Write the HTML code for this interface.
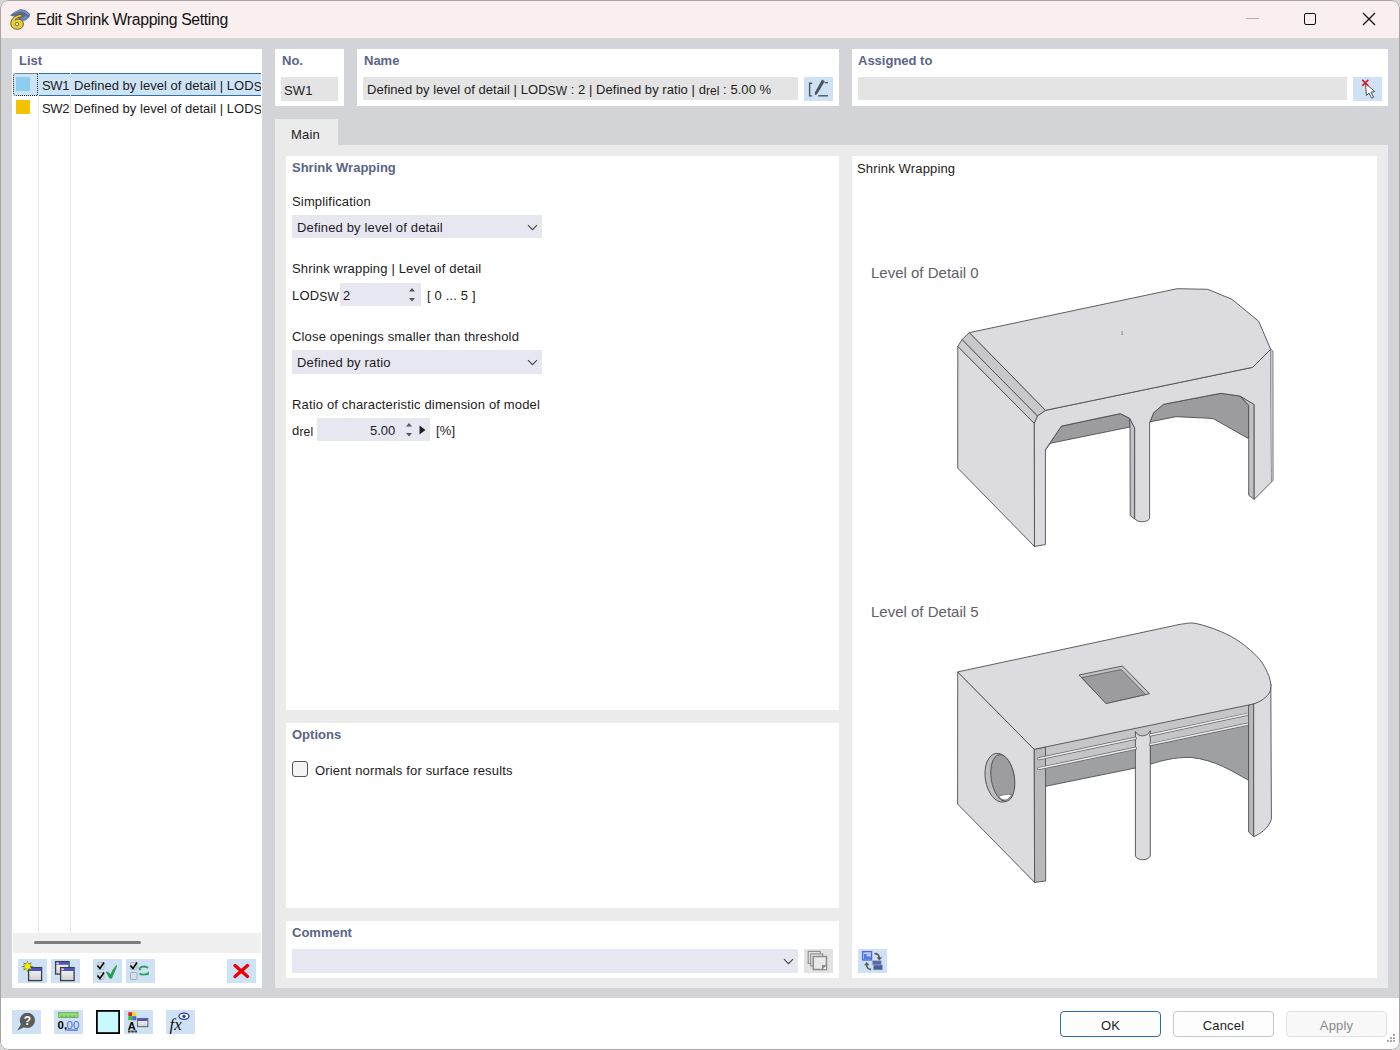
<!DOCTYPE html>
<html><head><meta charset="utf-8">
<style>
*{box-sizing:border-box;margin:0;padding:0}
html,body{width:1400px;height:1050px;overflow:hidden;background:#d6d6d6;font-family:"Liberation Sans",sans-serif;font-size:13px;color:#1c1c1c}
.a{position:absolute}
#win{position:absolute;left:0;top:0;width:1400px;height:1050px;background:#d3d4d8;border-radius:8px;overflow:hidden}
#wb{position:absolute;left:0;top:0;width:1400px;height:1050px;border:1px solid #a9a5a4;border-radius:8px}
#title{position:absolute;left:0;top:0;width:1400px;height:38px;background:#f8efee}
.w{position:absolute;background:#fff}
.t{position:absolute;white-space:nowrap;line-height:15px;font-size:13px;letter-spacing:0.16px}
.h{position:absolute;white-space:nowrap;line-height:15px;font-size:13px;font-weight:bold;color:#5a6487}
.inp{position:absolute;background:#e4e4e4}
.cmb{position:absolute;background:#e6e7f1}
.ib{position:absolute;background:#cfe2f5}
sub.s{font-size:12px;vertical-align:-1px;line-height:0}
</style></head><body>
<div id="win">
  <div id="title">
    <svg class="a" style="left:6px;top:4px" width="28" height="28" viewBox="0 0 28 28">
      <path d="M4 11.5 L9 7.5 L14.5 5 L20 6.5 L24 10 L23.5 13 L19.5 16.5 L15.5 17 L10 13 Z" fill="#566f98"/>
      <path d="M8 9 L14 6.5 L19.5 8 L22.5 11" stroke="#8499bb" stroke-width="1.2" fill="none"/>
      <path d="M13.5 15.5 L19 12 L22.5 12.5 L20 16" fill="#6a86c0"/>
      <path d="M15.8 10.4 C10 10.6 4.8 14.5 4.8 19.6 C4.8 23.2 7.6 25.2 11.2 25.2 C15 25.2 17.4 22.9 17.4 19.8 C17.4 17 15.2 15.2 12.2 15.2 C11 15.2 10 15.6 9.3 16.1 C10.2 14 12.4 13.1 15.9 13 Z" fill="#e6cd3c" stroke="#6e5e22" stroke-width="1"/>
      <circle cx="11.1" cy="20.1" r="1.7" fill="#f4ece4" stroke="#6e5e22" stroke-width="0.8"/>
    </svg>
    <div class="t" style="left:36px;top:10px;font-size:15.8px;line-height:20px;letter-spacing:-0.35px;color:#111">Edit Shrink Wrapping Setting</div>
    <div class="a" style="left:1246px;top:18px;width:13px;height:1px;background:#b8b0ae"></div>
    <div class="a" style="left:1304px;top:13px;width:12px;height:12px;border:1.3px solid #111;border-radius:2px"></div>
    <svg class="a" style="left:1362px;top:12px" width="14" height="14" viewBox="0 0 14 14"><path d="M1 1 L13 13 M13 1 L1 13" stroke="#111" stroke-width="1.3"/></svg>
  </div>

  <!-- List panel -->
  <div class="w" style="left:12px;top:49px;width:250px;height:939px"></div>
  <div class="h" style="left:19px;top:53px">List</div>

  <!-- list grid -->
  <div class="a" style="left:38px;top:73px;width:1px;height:860px;background:#e6e6e6"></div>
  <div class="a" style="left:70px;top:73px;width:1px;height:860px;background:#e6e6e6"></div>
  <div class="a" style="left:13px;top:73px;width:248px;height:23px;background:#cde4f7"></div>
  <div class="a" style="left:39px;top:73px;width:31px;height:1px;background:#2f6ea8"></div>
  <div class="a" style="left:71px;top:73px;width:190px;height:1px;background:#2f6ea8"></div>
  <div class="a" style="left:39px;top:95px;width:31px;height:1px;background:#2f6ea8"></div>
  <div class="a" style="left:71px;top:95px;width:190px;height:1px;background:#2f6ea8"></div>
  <svg class="a" style="left:13px;top:73px" width="26" height="24"><path d="M24.5 0.5 H3.5 Q0.5 0.5 0.5 3.5 V19.5 Q0.5 22.5 3.5 22.5 H24.5 Z" fill="none" stroke="#14202f" stroke-width="1" stroke-dasharray="1 1"/></svg>
  <div class="a" style="left:16px;top:77px;width:14px;height:14px;background:#8dcef0"></div>
  <div class="a" style="left:16px;top:100px;width:14px;height:14px;background:#f3c300"></div>
  <div class="a" style="left:13px;top:73px;width:248px;height:50px;overflow:hidden">
    <div class="t" style="left:29px;top:5px;letter-spacing:-0.3px">SW1</div>
    <div class="t" style="left:61px;top:5px;letter-spacing:0.02px">Defined by level of detail | LOD<sub class="s">S</sub></div>
    <div class="t" style="left:29px;top:28px;letter-spacing:-0.3px">SW2</div>
    <div class="t" style="left:61px;top:28px;letter-spacing:0.02px">Defined by level of detail | LOD<sub class="s">S</sub></div>
  </div>
  <!-- scrollbar -->
  <div class="a" style="left:13px;top:933px;width:248px;height:20px;background:#f0f0f0"></div>
  <div class="a" style="left:34px;top:941px;width:107px;height:3px;border-radius:2px;background:#7c7c7c"></div>
  <!-- toolbar icons -->
  <div class="ib" style="left:18px;top:959px;width:29px;height:24px"></div>
  <svg class="a" style="left:18px;top:959px" width="29" height="24" viewBox="0 0 29 24">
    <defs><linearGradient id="wg" x1="0" y1="0" x2="0" y2="1"><stop offset="0" stop-color="#fbfbfb"/><stop offset="1" stop-color="#cfcfd2"/></linearGradient></defs>
    <rect x="10.6" y="8.6" width="13" height="13" fill="url(#wg)" stroke="#3e3e48" stroke-width="1.3"/>
    <rect x="11" y="9" width="12.3" height="3" fill="#4a55c0"/>
    <path d="M9.40 1.20 L10.39 5.00 L13.78 3.02 L11.80 6.41 L15.60 7.40 L11.80 8.39 L13.78 11.78 L10.39 9.80 L9.40 13.60 L8.41 9.80 L5.02 11.78 L7.00 8.39 L3.20 7.40 L7.00 6.41 L5.02 3.02 L8.41 5.00 Z" fill="#6a6a5a"/><path d="M9.40 2.80 L10.70 5.15 L13.38 5.10 L12.00 7.40 L13.38 9.70 L10.70 9.65 L9.40 12.00 L8.10 9.65 L5.42 9.70 L6.80 7.40 L5.42 5.10 L8.10 5.15 Z" fill="#f4f400" stroke="#8a8a30" stroke-width="0.4"/>
  </svg>
  <div class="ib" style="left:51px;top:959px;width:29px;height:24px"></div>
  <svg class="a" style="left:51px;top:959px" width="29" height="24" viewBox="0 0 29 24">
    <rect x="4.6" y="2.6" width="13.5" height="12.5" fill="url(#wg)" stroke="#3e3e48" stroke-width="1.3"/>
    <rect x="5" y="3" width="12.8" height="2.8" fill="#4a55c0"/><rect x="5.3" y="3.3" width="2.5" height="2" fill="#ccc"/>
    <rect x="9.6" y="8.6" width="13.5" height="13" fill="url(#wg)" stroke="#3e3e48" stroke-width="1.3"/>
    <rect x="10" y="9" width="12.8" height="3" fill="#4a55c0"/><rect x="10.3" y="9.3" width="2.5" height="2" fill="#ccc"/>
  </svg>
  <div class="ib" style="left:93px;top:959px;width:29px;height:24px"></div>
  <svg class="a" style="left:93px;top:959px" width="29" height="24" viewBox="0 0 29 24">
    <rect x="4.5" y="3.5" width="6.5" height="7" rx="1" fill="#d8dce4" stroke="#9aa" stroke-width="0.6"/>
    <rect x="4.5" y="13.5" width="6.5" height="7" rx="1" fill="#d8dce4" stroke="#9aa" stroke-width="0.6"/>
    <path d="M4.5 6.5 L7 9.5 L11 3.5" stroke="#000" stroke-width="1.6" fill="none"/>
    <path d="M4.5 16.5 L7 19.5 L11 13.5" stroke="#000" stroke-width="1.6" fill="none"/>
    <path d="M13.5 13 C15 13.2 16.5 14.5 17.5 16.8 C19 12.5 21 9.5 23.5 7 C22 11 20 15 18.5 19 C17.5 19.3 16.8 19 16.2 18.2 C15.5 16.5 14.5 14.5 13.5 13 Z" fill="#22a04c" stroke="#22a04c" stroke-width="1.2" stroke-linejoin="round"/>
  </svg>
  <div class="ib" style="left:126px;top:959px;width:29px;height:24px"></div>
  <svg class="a" style="left:126px;top:959px" width="29" height="24" viewBox="0 0 29 24">
    <rect x="4.5" y="3.5" width="6.5" height="7" rx="1" fill="#d8dce4" stroke="#9aa" stroke-width="0.6"/>
    <rect x="4.5" y="13.5" width="6.5" height="7" rx="1" fill="#d8e0ec" stroke="#99a" stroke-width="0.8"/>
    <path d="M4.5 6.5 L7 9.5 L11 3.5" stroke="#000" stroke-width="1.6" fill="none"/>
    <path d="M22 9 C20 7 16 7 14 9" stroke="#2aa050" stroke-width="1.8" fill="none"/><path d="M12.5 7.5 L15.5 11 L13 11.5 Z" fill="#2aa050"/>
    <path d="M13.5 14.5 C15.5 16 19.5 16 21.5 14.5" stroke="#2aa050" stroke-width="1.8" fill="none"/><path d="M23 12.5 L22.5 16.5 L19.5 15 Z" fill="#2aa050"/>
  </svg>
  <div class="ib" style="left:227px;top:959px;width:29px;height:24px"></div>
  <svg class="a" style="left:227px;top:959px" width="29" height="24" viewBox="0 0 29 24"><path d="M8 6.5 L20.5 17.5 M20.5 6.5 L8 17.5" stroke="#ee0000" stroke-width="3.3" stroke-linecap="round"/></svg>

  <!-- No. -->
  <div class="w" style="left:275px;top:49px;width:69px;height:57px"></div>
  <div class="h" style="left:282px;top:53px">No.</div>
  <div class="inp" style="left:281px;top:77px;width:57px;height:24px"></div>
  <div class="t" style="left:284px;top:83px">SW1</div>

  <!-- Name -->
  <div class="w" style="left:357px;top:49px;width:482px;height:57px"></div>
  <div class="h" style="left:364px;top:53px">Name</div>
  <div class="inp" style="left:363px;top:77px;width:435px;height:23px"></div>
  <div class="t" style="left:367px;top:82px;letter-spacing:0.05px">Defined by level of detail | LOD<sub class="s">SW</sub> : 2 | Defined by ratio | d<sub class="s">rel</sub> : 5.00 %</div>
  <div class="ib" style="left:804px;top:77px;width:29px;height:24px"></div>

  <!-- Assigned -->
  <div class="w" style="left:852px;top:49px;width:536px;height:57px"></div>
  <div class="h" style="left:858px;top:53px">Assigned to</div>
  <div class="inp" style="left:858px;top:77px;width:489px;height:23px"></div>
  <div class="ib" style="left:1353px;top:77px;width:29px;height:24px"></div>

  <!-- tabs -->
  <div class="a" style="left:275px;top:119px;width:63px;height:26px;background:#ebebeb"></div>
  <div class="t" style="left:291px;top:127px">Main</div>
  <div class="a" style="left:275px;top:145px;width:1113px;height:843px;background:#ebebeb"></div>

  <!-- Shrink wrapping section -->
  <div class="w" style="left:286px;top:156px;width:553px;height:554px"></div>
  <div class="h" style="left:292px;top:160px">Shrink Wrapping</div>
  <div class="t" style="left:292px;top:194px">Simplification</div>
  <div class="cmb" style="left:292px;top:215px;width:250px;height:23px"></div>
  <div class="t" style="left:297px;top:220px">Defined by level of detail</div>
  <div class="t" style="left:292px;top:261px">Shrink wrapping | Level of detail</div>
  <div class="t" style="left:292px;top:288px">LOD<sub class="s">SW</sub></div>
  <div class="cmb" style="left:340px;top:283px;width:81px;height:23px"></div>
  <div class="t" style="left:343px;top:288px">2</div>
  <div class="t" style="left:427px;top:288px">[ 0 ... 5 ]</div>
  <div class="t" style="left:292px;top:329px">Close openings smaller than threshold</div>
  <div class="cmb" style="left:292px;top:350px;width:250px;height:24px"></div>
  <div class="t" style="left:297px;top:355px">Defined by ratio</div>
  <div class="t" style="left:292px;top:397px">Ratio of characteristic dimension of model</div>
  <div class="t" style="left:292px;top:423px">d<sub class="s">rel</sub></div>
  <div class="cmb" style="left:317px;top:418px;width:113px;height:23px"></div>
  <div class="t" style="left:370px;top:423px;letter-spacing:0">5.00</div>
  <div class="t" style="left:436px;top:423px">[%]</div>

  <!-- Options -->
  <div class="w" style="left:286px;top:723px;width:553px;height:185px"></div>
  <div class="h" style="left:292px;top:727px">Options</div>
  <div class="a" style="left:292px;top:761px;width:16px;height:16px;border:1px solid #555;border-radius:3px;background:#f4f4f4"></div>
  <div class="t" style="left:315px;top:763px">Orient normals for surface results</div>

  <!-- Comment -->
  <div class="w" style="left:286px;top:921px;width:553px;height:57px"></div>
  <div class="h" style="left:292px;top:925px">Comment</div>
  <div class="cmb" style="left:292px;top:949px;width:506px;height:24px"></div>
  <div class="a" style="left:804px;top:949px;width:29px;height:24px;background:#e2e2e2"></div>

  <!-- right panel -->
  <div class="w" style="left:852px;top:156px;width:525px;height:822px"></div>
  <div class="t" style="left:857px;top:161px">Shrink Wrapping</div>
  <div class="t" style="left:871px;top:264px;font-size:15px;line-height:18px;letter-spacing:0;color:#5f6068">Level of Detail 0</div>
  <div class="t" style="left:871px;top:603px;font-size:15px;line-height:18px;letter-spacing:0;color:#5f6068">Level of Detail 5</div>
<svg class="a" style="left:852px;top:156px" width="525" height="822" viewBox="852 156 525 822">
 <g stroke="#4e4e52" stroke-width="0.9" stroke-linejoin="round">
  <!-- ===== LOD 0 ===== -->
  <!-- arch1 dark -->
  <path d="M1045.4 449.8 L1061.4 426.1 L1120.3 413.6 L1129.6 418.2 L1130 427 L1050.2 443.3 Z" fill="#9c9c9e"/>
  <!-- column side strip -->
  <path d="M1129.6 418.2 L1134.7 428 L1134.7 519 L1130.2 515.5 L1130 427 Z" fill="#c2c2c6"/>
  <!-- arch2 dark -->
  <path d="M1149.6 422.9 L1153.7 412.6 L1163.5 404.3 L1220.7 393.3 L1240 396 L1248.7 405.3 L1248.7 438.7 L1213.3 418.7 L1204.7 418 L1176 416.7 L1149.6 421.9 Z" fill="#9c9c9e"/>
  <!-- right inner strip -->
  <path d="M1240 396 L1254.2 404.5 L1254.2 499.3 L1248.7 495.3 L1248.7 405.3 Z" fill="#c2c2c6"/>
  <!-- front face -->
  <path d="M1034.2 423.3 L1037.4 416 L1045.5 410.3 L1252.7 367.3 L1270.7 349.3 L1271.5 482 L1254.2 499.3 L1254.2 404.5 L1240 396 L1220.7 393.3 L1163.5 404.3 L1153.7 412.6 L1149.6 422.9 L1149.6 518.5 C1147.5 522.8 1137 522.8 1134.7 518.5 L1134.7 428 L1129.6 418.2 L1120.3 413.6 L1061.4 426.1 L1045.4 449.8 L1045.4 544.5 L1034.5 546.5 Z" fill="#dcdce0"/>
  <!-- left face -->
  <path d="M957.8 346.4 L1034.2 423.3 L1034.5 546.5 L957.7 468 Z" fill="#dcdce0"/>
  <!-- bevels -->
  <path d="M969.4 332.6 L1045.5 410.3 L1037.4 416 L962 339.6 Z" fill="#c8c8cc"/>
  <path d="M962 339.6 L1037.4 416 L1034.2 423.3 L957.8 346.4 Z" fill="#cdcdd1"/>
  <!-- top face -->
  <path d="M969.4 332.6 L1177.1 288.7 L1207.7 289.3 L1232 299.3 L1258.7 321.3 L1270.7 349.3 L1252.7 367.3 L1045.5 410.3 Z" fill="#dcdce0"/>
  <path d="M1270.7 349.3 L1273 351 L1273.2 480.5 L1271.5 482" fill="#c8c8cc" stroke-width="0.6"/>
 </g>
 <text x="1120.5" y="335" font-family="Liberation Serif" font-size="6" fill="#555">1</text>

 <g stroke="#4e4e52" stroke-width="0.9" stroke-linejoin="round">
  <!-- ===== LOD 5 ===== -->
  <!-- interior light band (beam face) -->
  <path d="M1045.5 746 L1248.6 702 L1248.6 725 L1045.5 770 Z" fill="#c5c5c7" stroke="none"/>
  <!-- interior dark left -->
  <path d="M1045.5 768 L1135.4 748.8 L1135.4 768 L1045.5 786.3 Z" fill="#9fa0a2" stroke="none"/>
  <path d="M1045.5 786.3 L1135.4 768" fill="none"/>
  <!-- interior dark right with arch -->
  <path d="M1150.3 745.5 L1248.6 724.5 L1248.6 780.3 C1232 771 1215 760 1190.9 757.4 C1175 757 1160 761 1150.3 764.3 Z" fill="#9fa0a2"/>
  <!-- column -->
  <path d="M1135.4 731.5 C1138 737.5 1147.5 737.5 1150.3 730.5 L1150.3 856 C1148 861 1137.5 861 1135.4 856 Z" fill="#dcdce0"/>
  <!-- left leg front strip -->
  <path d="M1034.1 749.3 L1045.5 747 L1045.7 881 L1034.6 882.4 Z" fill="#b9b9bc"/>
  <!-- rails -->
  <g stroke="#66666a" stroke-width="3" stroke-linecap="round" fill="none">
   <path d="M1038.8 758.8 L1135.4 738.3"/><path d="M1038.8 768.6 L1135.4 748.3"/>
   <path d="M1150.3 735 L1251 713.6"/><path d="M1150.3 744.6 L1251 723.5"/>
  </g>
  <g stroke="#eeeef0" stroke-width="1.5" stroke-linecap="round" fill="none">
   <path d="M1038.8 758.8 L1135.4 738.3"/><path d="M1038.8 768.6 L1135.4 748.3"/>
   <path d="M1150.3 735 L1251 713.6"/><path d="M1150.3 744.6 L1251 723.5"/>
  </g>
  <!-- right inner strip -->
  <path d="M1248.6 705 L1253.7 704 L1253.7 836.7 L1248.6 832 Z" fill="#b9b9bc"/>
  <!-- right leg front -->
  <path d="M1253.7 703.5 C1262 701 1270 695 1270.8 684 L1271.4 819.3 C1268 829 1260 834 1253.7 836.7 Z" fill="#dcdce0"/>
  <!-- left face -->
  <path d="M957.7 671.9 L1034.1 749.3 L1034.6 882.4 L957.6 804 Z" fill="#dcdce0"/>
  <!-- hole -->
  <ellipse cx="999.7" cy="777.7" rx="14.4" ry="24.6" transform="rotate(-9 999.7 777.7)" fill="#bdbdc0"/>
  <ellipse cx="1002.8" cy="778" rx="11.6" ry="23.6" transform="rotate(-9 1002.8 778)" fill="#9d9da0"/>
  <path d="M998.5 796.5 C1003 794.5 1008 794 1011.5 794.5 C1009 800 1004 802.5 998.5 796.5 Z" fill="#fff" stroke-width="0.6"/>
  <!-- top face -->
  <path d="M957.7 671.9 L1170 626.5 C1172.1 626.1 1178.2 624.5 1182.5 624.0 C1186.8 623.5 1189.8 622.3 1196.0 623.5 C1202.2 624.7 1212.7 628.1 1220.0 631.2 C1227.3 634.3 1233.8 637.7 1240.0 642.0 C1246.2 646.3 1253.2 652.4 1257.5 657.0 C1261.8 661.6 1263.8 665.3 1266.0 669.5 C1268.2 673.7 1269.9 678.2 1270.5 682.0 C1271.1 685.8 1271.0 689.2 1269.8 692.0 C1268.6 694.8 1265.8 697.2 1263.5 699.0 C1261.2 700.8 1258.5 702.0 1256.0 703.0 C1253.5 704.0 1249.8 704.7 1248.6 705.0 L1034.1 749.3 Z" fill="#dcdce0"/>
  <!-- square hole -->
  <path d="M1079 675 L1122.5 666 L1149.5 693.7 L1106 703.5 Z" fill="#c4c4c7"/>
  <path d="M1081.8 677.6 L1121.3 669.5 L1145.6 694.5 L1106 703.5 Z" fill="#9c9c9f" stroke-width="0.7"/>
 </g>
</svg>

  <div class="ib" style="left:858px;top:949px;width:29px;height:24px"></div>

  <!-- bottom bar -->
  <div class="a" style="left:0;top:998px;width:1400px;height:60px;background:#fff"></div>

  <div class="ib" style="left:12px;top:1010px;width:29px;height:24px"></div>
  <svg class="a" style="left:12px;top:1010px" width="29" height="24" viewBox="0 0 29 24">
    <circle cx="15.4" cy="10.4" r="7.6" fill="#5b5b5b"/><path d="M9 14 L5.3 20.4 L12.5 17 Z" fill="#5b5b5b"/>
    <text x="15.4" y="14.6" text-anchor="middle" font-family="Liberation Sans" font-weight="bold" font-size="12" fill="#fff">?</text>
  </svg>
  <div class="ib" style="left:54px;top:1010px;width:29px;height:24px"></div>
  <svg class="a" style="left:54px;top:1010px" width="29" height="24" viewBox="0 0 29 24">
    <rect x="4.5" y="2.5" width="19.5" height="5" fill="#92d97a" stroke="#66a84e" stroke-width="0.8"/>
    <path d="M8 5.5 V7.5 M12 5.5 V7.5 M16 5.5 V7.5 M20 5.5 V7.5" stroke="#4d7a3a" stroke-width="0.8"/>
    <text x="3.6" y="18.6" font-family="Liberation Sans" font-weight="bold" font-size="11.5" fill="#000">0,</text>
    <text x="12.5" y="18.6" font-family="Liberation Sans" font-size="11.5" fill="#4a6ad8">00</text>
    <rect x="12.8" y="19.4" width="11" height="1.3" fill="#4a6ad8"/>
  </svg>
  <svg class="a" style="left:96px;top:1010px" width="24" height="24"><rect x="0.9" y="0.9" width="22.2" height="22.2" fill="#c8f9fe" stroke="#000" stroke-width="1.8"/></svg>
  <div class="ib" style="left:124px;top:1010px;width:29px;height:24px"></div>
  <svg class="a" style="left:124px;top:1010px" width="29" height="24" viewBox="0 0 29 24">
    <rect x="4.3" y="2.2" width="4" height="4" fill="#e02020"/><rect x="8.3" y="2.2" width="4" height="4" fill="#e8e020"/>
    <rect x="4.3" y="6.2" width="4" height="4" fill="#30c030"/><rect x="8.3" y="6.2" width="4" height="4" fill="#5060d0"/>
    <text x="3.8" y="19.5" font-family="Liberation Sans" font-weight="bold" font-size="11" fill="#000">A</text>
    <rect x="4" y="20.5" width="2.5" height="2" fill="#333"/><rect x="7.3" y="20.5" width="2.5" height="2" fill="#333"/><rect x="10.5" y="20.5" width="2.5" height="2" fill="#333"/>
    <rect x="13.4" y="8.4" width="10.5" height="8.3" fill="url(#wg)" stroke="#555" stroke-width="0.9"/><rect x="13.8" y="8.8" width="9.8" height="2.2" fill="#4a55c0"/>
  </svg>
  <div class="ib" style="left:166px;top:1010px;width:29px;height:24px"></div>
  <svg class="a" style="left:166px;top:1010px" width="29" height="24" viewBox="0 0 29 24">
    <text x="3.5" y="20" font-family="Liberation Serif" font-style="italic" font-size="17" fill="#111">fx</text>
    <ellipse cx="18" cy="6.3" rx="5" ry="3.1" fill="#fff" stroke="#2a3a9a" stroke-width="1.3"/><circle cx="18" cy="6.3" r="1.6" fill="#2a3a9a"/>
  </svg>
  <div class="a" style="left:1060px;top:1011px;width:101px;height:26px;border:1px solid #2b6cb0;border-radius:4px;background:#fdfdfd"></div>
  <div class="t" style="left:1060px;top:1018px;width:101px;text-align:center">OK</div>
  <div class="a" style="left:1173px;top:1011px;width:101px;height:26px;border:1px solid #c8c8c8;border-radius:4px;background:#fdfdfd"></div>
  <div class="t" style="left:1173px;top:1018px;width:101px;text-align:center">Cancel</div>
  <div class="a" style="left:1286px;top:1011px;width:101px;height:26px;border:1px solid #e2e2e2;border-radius:4px;background:#f8f8f8"></div>
  <div class="t" style="left:1286px;top:1018px;width:101px;text-align:center;color:#8a8a8a">Apply</div>

<svg class="a" style="left:527px;top:224px" width="11" height="8" viewBox="0 0 11 8"><path d="M1 1.2 L5.5 5.7 L10 1.2" stroke="#444" stroke-width="1.1" fill="none"/></svg>
<svg class="a" style="left:527px;top:359px" width="11" height="8" viewBox="0 0 11 8"><path d="M1 1.2 L5.5 5.7 L10 1.2" stroke="#444" stroke-width="1.1" fill="none"/></svg>
<svg class="a" style="left:783px;top:958px" width="11" height="8" viewBox="0 0 11 8"><path d="M1 1.2 L5.5 5.7 L10 1.2" stroke="#444" stroke-width="1.1" fill="none"/></svg>
<svg class="a" style="left:408px;top:287px" width="8" height="16" viewBox="0 0 8 16"><path d="M1 4.5 L4 1 L7 4.5 Z M1 11 L4 14.5 L7 11 Z" fill="#555"/></svg>
<svg class="a" style="left:405px;top:422px" width="8" height="16" viewBox="0 0 8 16"><path d="M1 4.5 L4 1 L7 4.5 Z M1 11 L4 14.5 L7 11 Z" fill="#555"/></svg>
<svg class="a" style="left:419px;top:425px" width="8" height="10" viewBox="0 0 8 10"><path d="M0.5 0.5 L6.5 5 L0.5 9.5 Z" fill="#222"/></svg>
<svg class="a" style="left:804px;top:77px" width="29" height="24" viewBox="0 0 29 24">
    <path d="M8.2 6.2 H5.6 V18.9 H8.2" stroke="#50555e" stroke-width="1.4" fill="none"/>
    <path d="M14.3 18.8 H24" stroke="#50555e" stroke-width="1.4"/>
    <path d="M18 2.6 L20.8 4.2 L13.2 17 L10.9 18.3 L10.9 15.6 Z" fill="#50555e"/>
    <path d="M20.6 5.7 H24" stroke="#50555e" stroke-width="1.2"/>
  </svg>
<svg class="a" style="left:1353px;top:77px" width="29" height="24" viewBox="0 0 29 24">
    <path d="M12.6 6.4 L13.4 18.6 L16 16 L18.6 21.2 L20.6 20.2 L18 15.2 L21.8 14.6 Z" fill="#fff" stroke="#505050" stroke-width="1"/>
    <path d="M9.2 2.9 L15.4 8.9 M15.4 2.9 L9.2 8.9" stroke="#e01820" stroke-width="1.5"/>
  </svg>
<svg class="a" style="left:804px;top:949px" width="29" height="24" viewBox="0 0 29 24">
    <rect x="4.2" y="2.4" width="12" height="12" fill="none" stroke="#8c8c8c" stroke-width="1.1"/>
    <rect x="6.7" y="4.9" width="12" height="12" fill="#e4e4e4" stroke="#8c8c8c" stroke-width="1.1"/>
    <rect x="9.3" y="7.5" width="13.2" height="13" fill="#e9e9e9" stroke="#8c8c8c" stroke-width="1.5"/>
    <rect x="18" y="16" width="4.5" height="4.5" fill="#8c8c8c"/><path d="M19 20 L22 17 V20 Z" fill="#fff"/>
  </svg>
<svg class="a" style="left:858px;top:949px" width="29" height="24" viewBox="0 0 29 24">
    <rect x="4.6" y="2.6" width="9" height="8.4" fill="#b8ccf4" stroke="#4a68d8" stroke-width="1.3"/>
    <path d="M6 10.3 V5 H8.6 V7.6 H12.8 V10.3 Z" fill="#5577e0"/>
    <path d="M16.5 4.6 C19.5 4.4 21.2 6.2 21.3 9" stroke="#585858" stroke-width="1.6" fill="none"/>
    <path d="M18.6 8.3 L24 8.3 L21.3 11.6 Z" fill="#585858"/>
    <path d="M13.5 20.4 C10.5 20.6 8.6 18.6 8.7 15.6" stroke="#585858" stroke-width="1.6" fill="none"/>
    <path d="M6 16.3 L11.4 16.3 L8.7 13 Z" fill="#585858"/>
    <path d="M13 12 L14.5 11.6 V21 L13 21.6 Z" fill="#c8d6f0"/>
    <rect x="14.5" y="11.6" width="8.8" height="4.4" fill="#5a6aa4"/>
    <rect x="15.5" y="16" width="9" height="5" fill="#4c5c94"/>
    <path d="M14.5 16 H23.3 M15.5 21 H24.5" stroke="#c0cce8" stroke-width="0.6"/>
  </svg>
<svg class="a" style="left:1384px;top:1033px" width="14" height="14" viewBox="0 0 14 14" fill="#a8a8a8">
    <rect x="9" y="1" width="2" height="2"/><rect x="6" y="4" width="2" height="2"/><rect x="9" y="4" width="2" height="2"/>
    <rect x="3" y="7" width="2" height="2"/><rect x="6" y="7" width="2" height="2"/><rect x="9" y="7" width="2" height="2"/>
  </svg>
  <div id="wb"></div>
</div>
</body></html>
